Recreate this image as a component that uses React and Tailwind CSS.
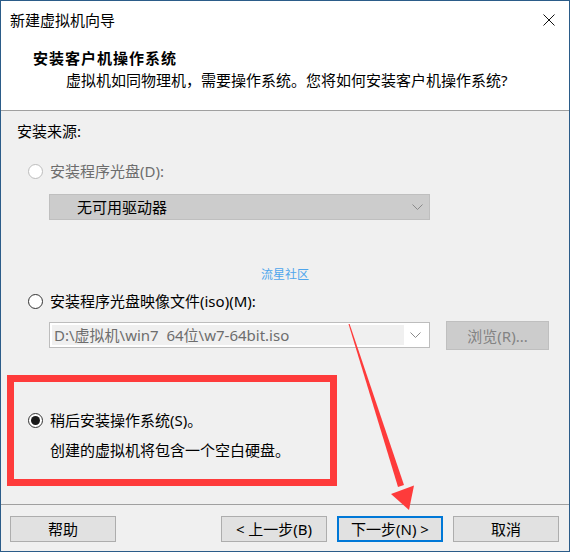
import React from "react";

const Radio = ({ checked, disabled }) => (
  <div
    className={`w-[15px] h-[15px] rounded-full border flex items-center justify-center bg-white ${
      disabled ? "border-[#bcbcbc]" : "border-[#333333]"
    }`}
  >
    {checked && <div className="w-[9px] h-[9px] rounded-full bg-[#1a1a1a]" />}
  </div>
);

const Chevron = () => (
  <svg width="11" height="7" viewBox="0 0 11 7">
    <path d="M0.5 0.5 L5.5 5.5 L10.5 0.5" fill="none" stroke="#8a8a8a" strokeWidth="1" />
  </svg>
);

export default function App() {
  return (
    <div
      className="w-[570px] h-[552px] relative border border-[#2b5c89] bg-[#f0f0f0] flex flex-col text-[15px] leading-[20px] text-black overflow-hidden"
      style={{ fontFamily: "'Noto Sans', 'Noto Sans CJK SC', sans-serif" }}
    >
      {/* header */}
      <div className="bg-white h-[110px] border-b border-[#a0a0a0] flex flex-col">
        <div className="h-[38px] flex items-center justify-between pl-[9px] pr-[14px]">
          <span>新建虚拟机向导</span>
          <svg width="12" height="12" viewBox="0 0 12 12">
            <path d="M0.5 0.5 L11.5 11.5 M11.5 0.5 L0.5 11.5" stroke="#111" strokeWidth="1" />
          </svg>
        </div>
        <div className="mt-[9px] pl-[32px] font-bold tracking-[1px]">安装客户机操作系统</div>
        <div className="mt-[2px] pl-[65px]">虚拟机如同物理机，需要操作系统。您将如何安装客户机操作系统?</div>
      </div>

      {/* body */}
      <div className="flex-1 flex flex-col">
        <div className="mt-[10px] pl-[16px]">安装来源:</div>

        <div className="mt-[20px] ml-[27px] flex items-center gap-[7px] text-[#6d6d6d]">
          <Radio disabled />
          <span>安装程序光盘(D):</span>
        </div>

        <div className="mt-[13px] ml-[48px] w-[381px] h-[26px] bg-[#cccccc] border border-[#bfbfbf] flex items-center justify-between pl-[27px] pr-[6px]">
          <span>无可用驱动器</span>
          <Chevron />
        </div>

        <div className="mt-[45px] text-center text-[12px] text-[#4ea5ec]">流星社区</div>

        <div className="mt-[6px] ml-[27px] flex items-center gap-[7px]">
          <Radio />
          <span>安装程序光盘映像文件(iso)(M):</span>
        </div>

        <div className="mt-[10px] ml-[48px] flex items-start gap-[16px]">
          <div className="mt-[1px] w-[381px] h-[26px] bg-white border border-[#bdbdbd] flex p-[2px]">
            <div className="flex-1 bg-[#f0f0f0] flex items-center pl-[2px] text-[#6d6d6d] whitespace-pre">
              {"D:\\虚拟机\\win7  64位\\w7-64bit.iso"}
            </div>
            <div className="w-[23px] flex items-center justify-center">
              <Chevron />
            </div>
          </div>
          <div className="w-[103px] h-[29px] bg-[#cccccc] border border-[#bfbfbf] flex items-center justify-center text-[#838383]">
            浏览(R)...
          </div>
        </div>

        <div className="mt-[60px] ml-[27px] flex items-center gap-[7px]">
          <Radio checked />
          <span>稍后安装操作系统(S)。</span>
        </div>
        <div className="mt-[10px] pl-[49px]">创建的虚拟机将包含一个空白硬盘。</div>
      </div>

      {/* footer */}
      <div className="border-t border-[#a0a0a0] pt-[11px] pb-[9px] pl-[9px] pr-[10px] flex">
        <div className="w-[106px] h-[26px] bg-[#e1e1e1] border border-[#adadad] flex items-center justify-center">帮助</div>
        <div className="ml-auto w-[106px] h-[26px] bg-[#e1e1e1] border border-[#adadad] flex items-center justify-center">&lt; 上一步(B)</div>
        <div className="ml-[10px] w-[106px] h-[26px] bg-[#e1e1e1] border-2 border-[#0078d7] flex items-center justify-center">下一步(N) &gt;</div>
        <div className="ml-[10px] w-[106px] h-[26px] bg-[#e1e1e1] border border-[#adadad] flex items-center justify-center">取消</div>
      </div>

      {/* annotation: red box */}
      <div className="absolute left-[6px] top-[374px] w-[330px] h-[111px] border-[7px] border-[#fe3b3b] pointer-events-none" />

      {/* annotation: arrow */}
      <svg className="absolute left-0 top-0 pointer-events-none" width="570" height="552" viewBox="-1 -1 570 552">
        <polygon points="346.5,322 347.6,322 402,483 396,485" fill="#fe3b3b" />
        <polygon points="389,492 412,483.5 407,508" fill="#fe3b3b" />
      </svg>
    </div>
  );
}
